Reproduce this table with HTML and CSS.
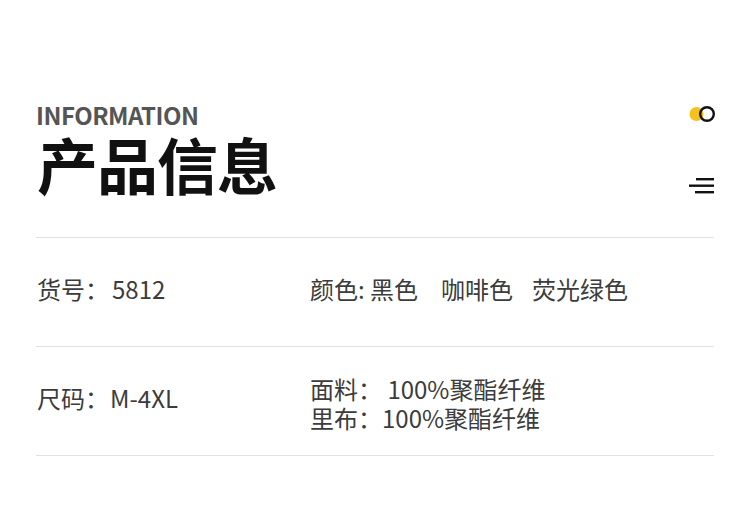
FILE: index.html
```html
<!DOCTYPE html>
<html>
<head>
<meta charset="utf-8">
<link rel="stylesheet" href="styles.css">
</head>
<body>
<div class="page">
  <header class="head">
    <div class="titles">
      <div class="en">INFORMATION</div>
      <h1 class="cn">产品信息</h1>
    </div>
    <div class="icons">
      <svg class="dots" width="27" height="18" viewBox="0 0 27 18">
        <circle cx="7.5" cy="9" r="7" fill="#f5c21a"/>
        <circle cx="18" cy="9" r="6.8" fill="none" stroke="#111" stroke-width="2.4"/>
      </svg>
      <svg class="menu" width="28" height="18" viewBox="0 0 28 18">
        <rect x="8" y="1" width="18" height="2.4" fill="#111"/>
        <rect x="1" y="7.5" width="25" height="2.4" fill="#111"/>
        <rect x="7" y="14" width="19" height="2.4" fill="#111"/>
      </svg>
    </div>
  </header>
  <div class="row">
    <div class="cell left"><span class="lab">货号：</span><span class="val">5812</span></div>
    <div class="cell right"><span>颜色: 黑色</span><span class="gap1">咖啡色</span><span class="gap2">荧光绿色</span></div>
  </div>
  <div class="row">
    <div class="cell left"><span class="lab">尺码：</span><span class="val2">M-4XL</span></div>
    <div class="cell right stack">
      <div>面料： 100%聚酯纤维</div>
      <div>里布：100%聚酯纤维</div>
    </div>
  </div>
</div>
</body>
</html>
```
FILE: styles.css
```css
* { box-sizing: border-box; margin: 0; padding: 0; }
html, body { background: #fff; }
body {
  font-family: "Noto Sans CJK SC", "Noto Sans", sans-serif;
  width: 750px;
  height: 516px;
  overflow: hidden;
}
.page {
  padding: 99px 36px 0 36px;
}
.head {
  display: flex;
  justify-content: space-between;
  border-bottom: 1px solid #e2e2e2;
  height: 139px;
}
.en {
  font-size: 24px;
  font-weight: 700;
  color: #555;
  line-height: 32px;
  letter-spacing: -0.5px;
}
.cn {
  font-size: 61px;
  font-weight: 700;
  color: #111;
  line-height: 72px;
  margin-top: -3px;
  margin-left: 1px;
  letter-spacing: -1px;
}
.icons {
  display: flex;
  flex-direction: column;
  align-items: flex-end;
  padding-top: 6px;
  margin-right: -2px;
}
.dots { display: block; }
.menu { display: block; margin-top: 54px; }
.row {
  display: flex;
  align-items: center;
  height: 109px;
  padding-bottom: 7px;
  border-bottom: 1px solid #e2e2e2;
  font-size: 24px;
  color: #3c3c3c;
}
.cell.left { width: 274px; padding-left: 1px; }
.val { margin-left: 3px; }
.val2 { margin-left: 1px; }
.gap1 { margin-left: 23px; }
.gap2 { margin-left: 19px; }
.stack { line-height: 29px; margin-top: 11px; }
```
